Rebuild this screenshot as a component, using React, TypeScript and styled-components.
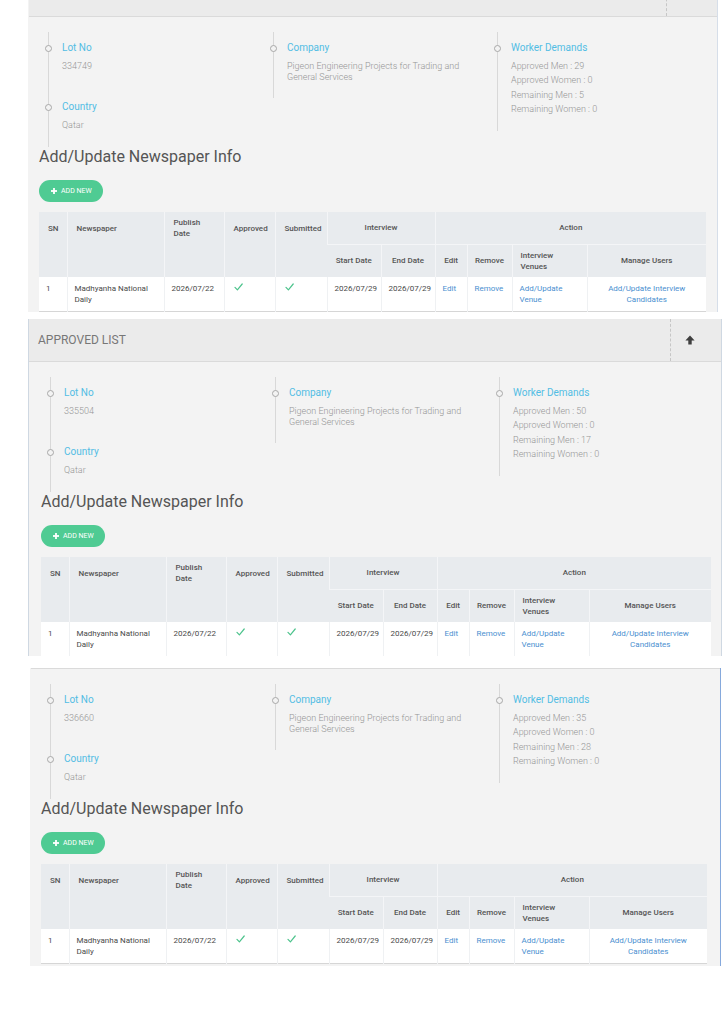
import React from "react";
import styled, { createGlobalStyle } from "styled-components";

const GlobalStyle = createGlobalStyle`
  html, body { margin: 0; padding: 0; background: #ffffff; }
  body {
    font-family: Roboto, "Noto Sans", "Liberation Sans", Arial, sans-serif;
    -webkit-font-smoothing: antialiased;
  }
  * { box-sizing: border-box; }
`;

type Lot = {
  lotNo: string;
  country: string;
  company: string;
  approvedMen: number;
  approvedWomen: number;
  remainingMen: number;
  remainingWomen: number;
};

type Frame = {
  gap: number;
  height: number;
  crop: number;
  left: number;
  width: number;
  padL: number;
  padR: number;
  borderL: string;
  borderR: string;
};

const lots: { lot: Lot; frame: Frame }[] = [
  {
    lot: {
      lotNo: "334749",
      country: "Qatar",
      company: "Pigeon Engineering Projects for Trading and General Services",
      approvedMen: 29,
      approvedWomen: 0,
      remainingMen: 5,
      remainingWomen: 0,
    },
    frame: { gap: 0, height: 312, crop: 26, left: 28, width: 690, padL: 10, padR: 11, borderL: "#f3f3f3", borderR: "#d6dee9" },
  },
  {
    lot: {
      lotNo: "335504",
      country: "Qatar",
      company: "Pigeon Engineering Projects for Trading and General Services",
      approvedMen: 50,
      approvedWomen: 0,
      remainingMen: 17,
      remainingWomen: 0,
    },
    frame: { gap: 7, height: 337, crop: 0, left: 28, width: 694, padL: 12, padR: 10, borderL: "#cfd8e2", borderR: "#cfd8e2" },
  },
  {
    lot: {
      lotNo: "336660",
      country: "Qatar",
      company: "Pigeon Engineering Projects for Trading and General Services",
      approvedMen: 35,
      approvedWomen: 0,
      remainingMen: 28,
      remainingWomen: 0,
    },
    frame: { gap: 12, height: 298, crop: 42, left: 30, width: 691, padL: 10, padR: 13, borderL: "#f3f3f3", borderR: "#86a9dc" },
  },
];

const newspaperRow = {
  sn: 1,
  newspaper: "Madhyanha National Daily",
  publish: "2026/07/22",
  start: "2026/07/29",
  end: "2026/07/29",
};

/* ---------- page / snapshot frames ---------- */

const Page = styled.div`
  display: flex;
  flex-direction: column;
`;

const Snapshot = styled.section<{ $gap: number; $height: number; $left: number }>`
  margin-top: ${(p) => p.$gap}px;
  height: ${(p) => p.$height}px;
  padding-left: ${(p) => p.$left}px;
  overflow: hidden;
`;

const Panel = styled.div<{ $crop: number; $width: number; $bl: string; $br: string }>`
  width: ${(p) => p.$width}px;
  margin-top: -${(p) => p.$crop}px;
  background: #f3f3f3;
  border-left: 1px solid ${(p) => p.$bl};
  border-right: 1px solid ${(p) => p.$br};
  padding-bottom: 40px;
`;

const PanelHeader = styled.header`
  display: flex;
  align-items: stretch;
  height: 43px;
  background: #ebebeb;
  border-bottom: 1px solid #dadada;
`;

const PanelTitle = styled.h2`
  flex: 1;
  margin: 0;
  padding-left: 9px;
  display: flex;
  align-items: center;
  font-size: 12px;
  font-weight: 400;
  color: #777777;
  text-transform: uppercase;
`;

const HeaderTool = styled.div`
  width: 38px;
  margin-right: 13px;
  border-left: 1px dashed #c6c6c6;
  display: flex;
  align-items: center;
  justify-content: center;
`;

const PanelBody = styled.div<{ $padL: number; $padR: number }>`
  display: flex;
  flex-direction: column;
  padding: 15px ${(p) => p.$padR}px 0 ${(p) => p.$padL}px;
`;

/* ---------- timeline summary ---------- */

const Timeline = styled.div`
  display: grid;
  grid-template-columns: 225px 224px 1fr;
  align-items: start;
`;

const TimelineColumn = styled.ul`
  list-style: none;
  margin: 0 0 0 9px;
  padding: 8px 0 15px 13px;
  border-left: 1px solid #d8d8d8;
`;

const TimelineItem = styled.li`
  position: relative;
  & + & {
    margin-top: 26px;
  }
`;

const Dot = styled.span`
  position: absolute;
  left: -17px;
  top: 4.5px;
  width: 7px;
  height: 7px;
  border-radius: 50%;
  border: 1px solid #a8a8a8;
  background: #f3f3f3;
`;

const ItemLabel = styled.div`
  font-size: 10px;
  line-height: 16px;
  color: #52bde4;
`;

const ItemValue = styled.div<{ $mt: number; $lh: number }>`
  margin-top: ${(p) => p.$mt}px;
  font-size: 9px;
  font-weight: 300;
  line-height: ${(p) => p.$lh}px;
  color: #959595;
`;

/* ---------- newspaper section ---------- */

const SectionHeading = styled.h3`
  margin: 0;
  font-size: 16px;
  font-weight: 400;
  line-height: 20px;
  color: #555555;
`;

const AddButton = styled.button`
  align-self: flex-start;
  margin-top: 13px;
  height: 22px;
  padding: 0 11px 0 12px;
  border: none;
  border-radius: 11px;
  background: #4fcb93;
  color: #ffffff;
  font-family: inherit;
  font-size: 7px;
  font-weight: 400;
  display: inline-flex;
  align-items: center;
  gap: 4px;
`;

const Table = styled.table`
  margin-top: 10px;
  width: 100%;
  table-layout: fixed;
  border-collapse: collapse;
  font-size: 8px;
  line-height: 11px;
  border-bottom: 1px solid #d6d6d6;
`;

const HeadCell = styled.th<{ $align?: "left" | "center"; $h?: number }>`
  background: #e8ebee;
  color: #555555;
  font-weight: 500;
  text-align: ${(p) => p.$align ?? "left"};
  vertical-align: middle;
  padding: 0 9px;
  height: ${(p) => p.$h ?? 32}px;
  border-left: 1px solid #f4f5f7;
  white-space: nowrap;
  &:first-child {
    border-left: none;
  }
`;

const SubHeadCell = styled(HeadCell)`
  padding: 0 4px;
  border-top: 1px solid #f4f5f7;
`;

const SpanHeadCell = styled(HeadCell)`
  vertical-align: top;
`;

const HeadText = styled.div`
  height: 32px;
  display: flex;
  align-items: center;
`;

const BodyCell = styled.td<{ $align?: "left" | "center" }>`
  background: #ffffff;
  color: #4a4a4a;
  text-align: ${(p) => p.$align ?? "left"};
  vertical-align: top;
  padding: 6px 7px;
  height: 34px;
  border-left: 1px solid #eff1f3;
  &:first-child {
    border-left: none;
  }
`;

const LinkText = styled.a`
  color: #4a8fd0;
  text-decoration: none;
`;

const CheckMark = styled.svg`
  display: block;
  margin: 0 0 0 2px;
`;

/* ---------- icons ---------- */

const ArrowUpIcon = () => (
  <svg width="10" height="10" viewBox="0 0 10 10" aria-hidden="true">
    <path d="M5 0.6 L9.6 5.4 H6.7 V9.4 H3.3 V5.4 H0.4 Z" fill="#3f3f3f" />
  </svg>
);

const PlusIcon = () => (
  <svg width="6" height="6" viewBox="0 0 6 6" aria-hidden="true">
    <rect x="2.1" y="0" width="1.8" height="6" fill="#ffffff" />
    <rect x="0" y="2.1" width="6" height="1.8" fill="#ffffff" />
  </svg>
);

const Check = () => (
  <CheckMark width="9" height="8" viewBox="0 0 9 8" aria-hidden="true">
    <path d="M1 4.4 L3.4 6.8 L8.2 1" fill="none" stroke="#4cc38c" strokeWidth="1.2" strokeLinecap="round" strokeLinejoin="round" />
  </CheckMark>
);

/* ---------- composed parts ---------- */

const LotSummary = ({ lot }: { lot: Lot }) => (
  <Timeline>
    <TimelineColumn>
      <TimelineItem>
        <Dot />
        <ItemLabel>Lot No</ItemLabel>
        <ItemValue $mt={3} $lh={14}>{lot.lotNo}</ItemValue>
      </TimelineItem>
      <TimelineItem>
        <Dot />
        <ItemLabel>Country</ItemLabel>
        <ItemValue $mt={3} $lh={14}>{lot.country}</ItemValue>
      </TimelineItem>
    </TimelineColumn>
    <TimelineColumn>
      <TimelineItem>
        <Dot />
        <ItemLabel>Company</ItemLabel>
        <ItemValue $mt={5} $lh={11}>{lot.company}</ItemValue>
      </TimelineItem>
    </TimelineColumn>
    <TimelineColumn>
      <TimelineItem>
        <Dot />
        <ItemLabel>Worker Demands</ItemLabel>
        <ItemValue $mt={3} $lh={14.3}>
          Approved Men : {lot.approvedMen}
          <br />
          Approved Women : {lot.approvedWomen}
          <br />
          Remaining Men : {lot.remainingMen}
          <br />
          Remaining Women : {lot.remainingWomen}
        </ItemValue>
      </TimelineItem>
    </TimelineColumn>
  </Timeline>
);

const NewspaperTable = () => (
  <Table>
    <colgroup>
      <col style={{ width: 28 }} />
      <col style={{ width: 97 }} />
      <col style={{ width: 60 }} />
      <col style={{ width: 51 }} />
      <col style={{ width: 52 }} />
      <col style={{ width: 54 }} />
      <col style={{ width: 54 }} />
      <col style={{ width: 32 }} />
      <col style={{ width: 45 }} />
      <col style={{ width: 75 }} />
      <col />
    </colgroup>
    <thead>
      <tr>
        <SpanHeadCell rowSpan={2}><HeadText>SN</HeadText></SpanHeadCell>
        <SpanHeadCell rowSpan={2}><HeadText>Newspaper</HeadText></SpanHeadCell>
        <SpanHeadCell rowSpan={2}><HeadText>Publish<br />Date</HeadText></SpanHeadCell>
        <SpanHeadCell rowSpan={2}><HeadText>Approved</HeadText></SpanHeadCell>
        <SpanHeadCell rowSpan={2}><HeadText>Submitted</HeadText></SpanHeadCell>
        <HeadCell colSpan={2} $align="center">Interview</HeadCell>
        <HeadCell colSpan={4} $align="center">Action</HeadCell>
      </tr>
      <tr>
        <SubHeadCell $h={33} $align="center">Start Date</SubHeadCell>
        <SubHeadCell $h={33} $align="center">End Date</SubHeadCell>
        <SubHeadCell $h={33} $align="center">Edit</SubHeadCell>
        <SubHeadCell $h={33} $align="center">Remove</SubHeadCell>
        <SubHeadCell $h={33}>&nbsp;&nbsp;Interview<br />&nbsp;&nbsp;Venues</SubHeadCell>
        <SubHeadCell $h={33} $align="center">Manage Users</SubHeadCell>
      </tr>
    </thead>
    <tbody>
      <tr>
        <BodyCell>{newspaperRow.sn}</BodyCell>
        <BodyCell>{newspaperRow.newspaper}</BodyCell>
        <BodyCell>{newspaperRow.publish}</BodyCell>
        <BodyCell><Check /></BodyCell>
        <BodyCell><Check /></BodyCell>
        <BodyCell>{newspaperRow.start}</BodyCell>
        <BodyCell>{newspaperRow.end}</BodyCell>
        <BodyCell><LinkText href="#">Edit</LinkText></BodyCell>
        <BodyCell><LinkText href="#">Remove</LinkText></BodyCell>
        <BodyCell><LinkText href="#">Add/Update Venue</LinkText></BodyCell>
        <BodyCell $align="center"><LinkText href="#">Add/Update Interview Candidates</LinkText></BodyCell>
      </tr>
    </tbody>
  </Table>
);

const ApprovedPanel = ({ lot, frame }: { lot: Lot; frame: Frame }) => (
  <Snapshot $gap={frame.gap} $height={frame.height} $left={frame.left}>
    <Panel $crop={frame.crop} $width={frame.width} $bl={frame.borderL} $br={frame.borderR}>
      <PanelHeader>
        <PanelTitle>Approved List</PanelTitle>
        <HeaderTool>
          <ArrowUpIcon />
        </HeaderTool>
      </PanelHeader>
      <PanelBody $padL={frame.padL} $padR={frame.padR}>
        <LotSummary lot={lot} />
        <SectionHeading>Add/Update Newspaper Info</SectionHeading>
        <AddButton type="button">
          <PlusIcon />
          ADD NEW
        </AddButton>
        <NewspaperTable />
      </PanelBody>
    </Panel>
  </Snapshot>
);

export default function App() {
  return (
    <>
      <GlobalStyle />
      <Page>
        {lots.map((entry) => (
          <ApprovedPanel key={entry.lot.lotNo} lot={entry.lot} frame={entry.frame} />
        ))}
      </Page>
    </>
  );
}
